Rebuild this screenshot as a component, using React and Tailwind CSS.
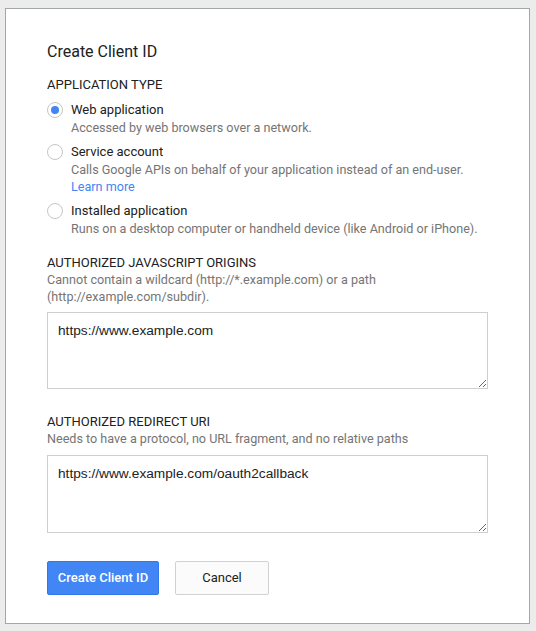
import { useState } from 'react'

const OPTIONS = [
  { id: 'web', label: 'Web application', desc: 'Accessed by web browsers over a network.' },
  { id: 'service', label: 'Service account', desc: 'Calls Google APIs on behalf of your application instead of an end-user.', link: 'Learn more' },
  { id: 'installed', label: 'Installed application', desc: 'Runs on a desktop computer or handheld device (like Android or iPhone).' },
]

function Radio({ checked }) {
  return (
    <span className="mt-[1px] flex h-[16px] w-[16px] shrink-0 items-center justify-center rounded-full border border-[#c6c6c6] bg-white">
      {checked && <span className="h-[8px] w-[8px] rounded-full bg-[#4285f4]" />}
    </span>
  )
}

export default function App() {
  const [type, setType] = useState('web')
  const [origins, setOrigins] = useState('https://www.example.com')
  const [redirect, setRedirect] = useState('https://www.example.com/oauth2callback')

  return (
    <div className="min-h-[631px] bg-[#ececec] pl-[5px] pt-[8px] font-['Roboto',sans-serif]">
      <div className="h-[616px] w-[525px] border border-[#a2a8a2] bg-white pl-[41px] pt-[33px]">
        {/* ── Title ── */}
        <h1 className="text-[16px] leading-[20px] text-[#212121]">Create Client ID</h1>

        {/* ── Application type ── */}
        <div className="mt-[15px] text-[13px] leading-[16px] uppercase text-[#212121]">Application type</div>
        <div className="mt-[8px] flex flex-col gap-[7px]">
          {OPTIONS.map(o => (
            <label key={o.id} className="flex cursor-pointer gap-[8px]" onClick={() => setType(o.id)}>
              <Radio checked={type === o.id} />
              <div>
                <div className="text-[13px] leading-[18px] text-[#212121]">{o.label}</div>
                <div className="text-[12.6px] leading-[17px] text-[#757575]">{o.desc}</div>
                {o.link && (
                  <a href="#" className="block text-[12.6px] leading-[17px] text-[#4285f4]">{o.link}</a>
                )}
              </div>
            </label>
          ))}
        </div>

        {/* ── JS origins ── */}
        <div className="mt-[18px] text-[13px] leading-[16px] uppercase text-[#212121]">Authorized JavaScript origins</div>
        <p className="w-[440px] text-[12.6px] leading-[17px] text-[#757575]">
          Cannot contain a wildcard (http://*.example.com) or a path (http://example.com/subdir).
        </p>
        <textarea
          value={origins}
          onChange={e => setOrigins(e.target.value)}
          className="mt-[7px] block h-[77px] w-[441px] border border-[#cdd0cd] px-[10px] py-[9px] font-['Liberation_Sans',sans-serif] text-[13.7px] leading-[18px] text-[#222] outline-none"
        />

        {/* ── Redirect URI ── */}
        <div className="mt-[25px] text-[13px] leading-[16px] uppercase text-[#212121]">Authorized redirect URI</div>
        <p className="text-[12.6px] leading-[17px] text-[#757575]">
          Needs to have a protocol, no URL fragment, and no relative paths
        </p>
        <textarea
          value={redirect}
          onChange={e => setRedirect(e.target.value)}
          className="mt-[8px] block h-[78px] w-[441px] border border-[#cdd0cd] px-[10px] py-[9px] font-['Liberation_Sans',sans-serif] text-[13.7px] leading-[18px] text-[#222] outline-none"
        />

        {/* ── Actions ── */}
        <div className="mt-[28px] flex gap-[16px]">
          <button className="h-[34px] w-[112px] rounded-[2px] border border-[#3079ed] bg-[#4285f4] text-[13px] font-medium text-white">
            Create Client ID
          </button>
          <button className="h-[34px] w-[94px] rounded-[2px] border border-[#d0d4d0] bg-[#fbfbfb] text-[13px] text-[#212121]">
            Cancel
          </button>
        </div>
      </div>
    </div>
  )
}
